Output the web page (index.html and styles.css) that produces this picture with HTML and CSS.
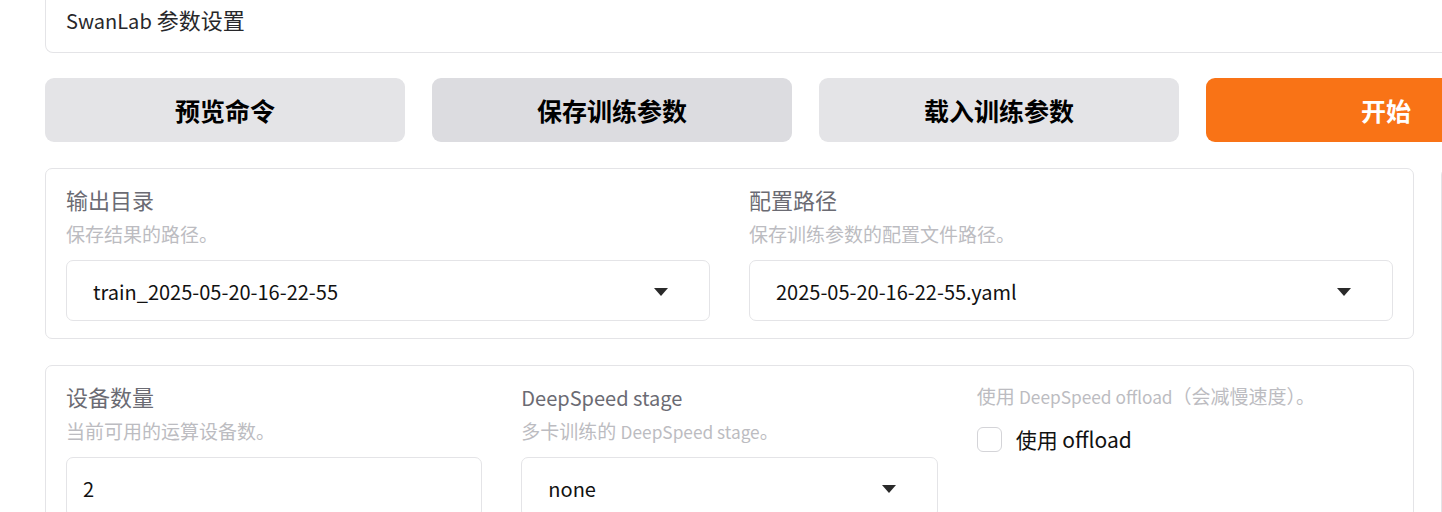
FILE: index.html
```html
<!DOCTYPE html>
<html lang="zh">
<head>
<meta charset="utf-8">
<link rel="stylesheet" href="styles.css">
</head>
<body>
<div class="page">
  <div class="title-panel"><span class="en">SwanLab</span> 参数设置</div>

  <div class="actions">
    <button class="btn">预览命令</button>
    <button class="btn btn-hover">保存训练参数</button>
    <button class="btn">载入训练参数</button>
    <button class="btn btn-primary">开始</button>
  </div>

  <div class="main">
    <div class="left">
      <div class="panel panel-paths grid-2">
        <div class="field">
          <div class="label">输出目录</div>
          <div class="info">保存结果的路径。</div>
          <div class="box dropdown">
            <span class="value">train_2025-05-20-16-22-55</span>
            <span class="arrow"></span>
          </div>
        </div>
        <div class="field">
          <div class="label">配置路径</div>
          <div class="info">保存训练参数的配置文件路径。</div>
          <div class="box dropdown">
            <span class="value">2025-05-20-16-22-55.yaml</span>
            <span class="arrow"></span>
          </div>
        </div>
      </div>

      <div class="panel grid-3">
        <div class="field">
          <div class="label">设备数量</div>
          <div class="info">当前可用的运算设备数。</div>
          <div class="box number">
            <span class="value">2</span>
          </div>
        </div>
        <div class="field">
          <div class="label"><span class="en">DeepSpeed stage</span></div>
          <div class="info">多卡训练的 <span class="en">DeepSpeed stage</span>。</div>
          <div class="box dropdown">
            <span class="value">none</span>
            <span class="arrow"></span>
          </div>
        </div>
        <div class="field">
          <div class="info info-top">使用 <span class="en">DeepSpeed offload</span>（会减慢速度）。</div>
          <label class="check">
            <span class="checkbox"></span>
            <span class="check-label">使用 offload</span>
          </label>
        </div>
      </div>
    </div>
    <div class="right">
      <div class="panel side"></div>
    </div>
  </div>
</div>
</body>
</html>
```

FILE: styles.css
```css
html, body {
  margin: 0;
  padding: 0;
  overflow: hidden;
  background: #ffffff;
}

body {
  font-family: "Noto Sans CJK SC", "Noto Sans", sans-serif;
  color: #1f1f1f;
}

.page {
  width: 1560px;
  margin-left: 45px;
  margin-top: -10px;
}

.en {
  font-size: 0.91em;
  line-height: 1;
}

.title-panel {
  border: 1px solid #e4e4e7;
  border-top: none;
  border-radius: 0 0 8px 8px;
  padding: 14px 20px 18px 20px;
  font-size: 22px;
  line-height: 30px;
  color: #27272a;
}

.actions {
  display: grid;
  grid-template-columns: repeat(4, 360px);
  gap: 27px;
  margin-top: 25px;
}

.btn {
  height: 64px;
  border: none;
  border-radius: 9px;
  background: #e4e4e7;
  font-family: "Noto Sans CJK SC", sans-serif;
  font-weight: 700;
  font-size: 25px;
  color: #000000;
  padding: 0;
}

.btn-hover {
  background: #dcdce0;
}

.btn-primary {
  background: #f97316;
  color: #ffffff;
}

.main {
  display: flex;
  gap: 27px;
  margin-top: 26px;
}

.left {
  width: 1369px;
  display: flex;
  flex-direction: column;
  gap: 26px;
}

.right {
  flex: 1;
}

.panel {
  border: 1px solid #e4e4e7;
  border-radius: 7px;
  padding: 18px 20px 16px 20px;
  background: #ffffff;
}

.panel-paths {
  padding-bottom: 17px;
}

.side {
  height: 600px;
}

.grid-2 {
  display: grid;
  grid-template-columns: 1fr 1fr;
  column-gap: 39px;
}

.grid-3 {
  display: grid;
  grid-template-columns: 1fr 1fr 1fr;
  column-gap: 39px;
  height: 200px;
}

.field {
  display: flex;
  flex-direction: column;
}

.label {
  font-size: 22px;
  line-height: 24px;
  height: 24px;
  color: #6b6b73;
  margin-bottom: 11px;
}

.info {
  font-size: 19px;
  line-height: 24px;
  height: 24px;
  color: #bcbcc1;
  margin-bottom: 14px;
}

.info-top {
  margin-bottom: 18px;
}

.box {
  height: 61px;
  box-sizing: border-box;
  border: 1px solid #e4e4e7;
  border-radius: 7px;
  display: flex;
  align-items: center;
  font-size: 20px;
  color: #111111;
}

.dropdown {
  padding: 2px 41px 0 26px;
  justify-content: space-between;
}

.number {
  padding: 2px 16px 0 16px;
}

.arrow {
  width: 0;
  height: 0;
  border-left: 7px solid transparent;
  border-right: 7px solid transparent;
  border-top: 8px solid #2a2a2a;
}

.check {
  display: flex;
  align-items: center;
  gap: 14px;
}

.checkbox {
  width: 25px;
  height: 25px;
  box-sizing: border-box;
  border: 1px solid #d4d4d8;
  border-radius: 6px;
  background: #ffffff;
}

.check-label {
  font-size: 21px;
  line-height: 26px;
  color: #111111;
}
```
